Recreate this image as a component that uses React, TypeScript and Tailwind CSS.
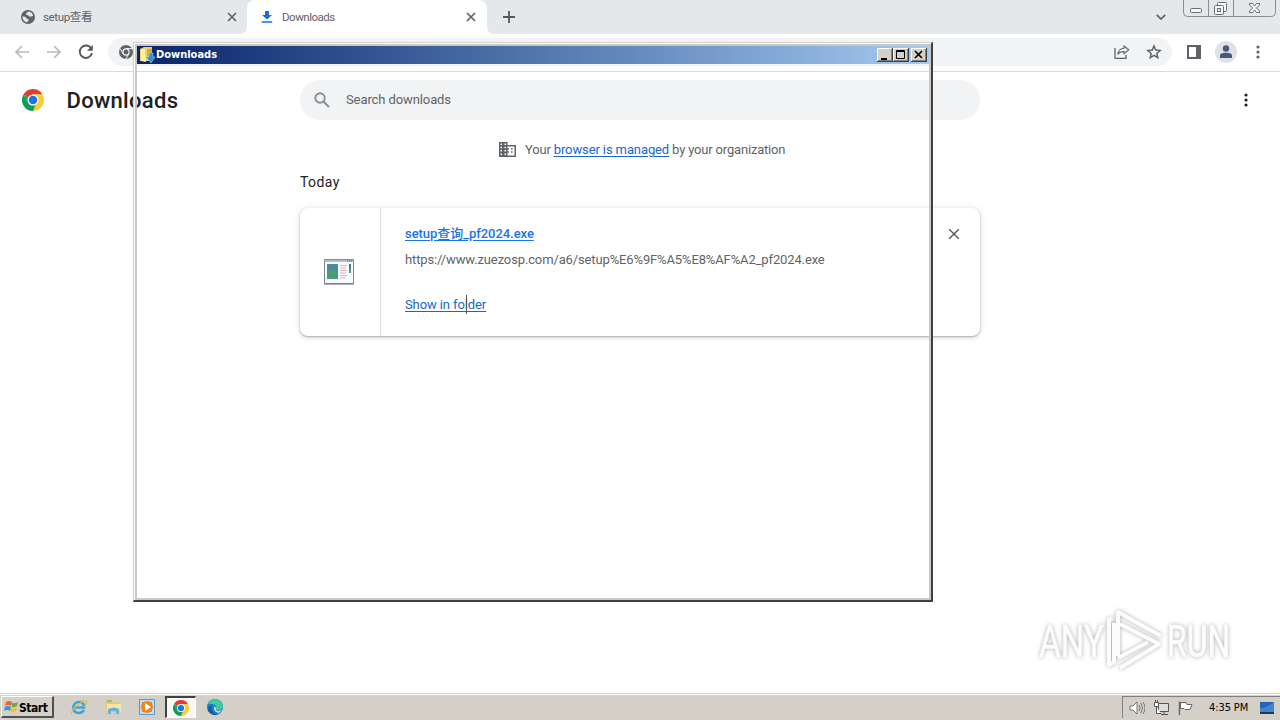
import type { ReactNode } from "react";

function ChromeLogo({ className }: { className?: string }) {
  return (
    <svg viewBox="0 0 48 48" className={className}>
      <path d="M3.2 12A24 24 0 0 1 44.8 12H24A12 12 0 0 0 13.6 18Z" fill="#e33b2e" />
      <path d="M3.2 12 13.6 30A12 12 0 0 0 24 36L24 48A24 24 0 0 1 3.2 12Z" fill="#109d58" />
      <path d="M24 48 34.4 30A12 12 0 0 0 34.4 18L24 12H44.8A24 24 0 0 1 24 48Z" fill="#fccd33" />
      <path d="M3.2 12 13.6 30 24 36 24 48 34.4 30 24 24Z" fill="#109d58" />
      <path d="M24 48 34.4 30 40 12 24 12 30 32Z" fill="#fccd33" />
      <circle cx="24" cy="24" r="12" fill="#fff" />
      <circle cx="24" cy="24" r="9.3" fill="#1a73e8" />
    </svg>
  );
}

function Close({ className }: { className?: string }) {
  return (
    <svg viewBox="0 0 10 10" className={className} fill="none" stroke="currentColor">
      <path d="M1 1 9 9M9 1 1 9" />
    </svg>
  );
}

function Dots({ className }: { className?: string }) {
  return (
    <svg viewBox="0 0 4 14" className={className} fill="currentColor">
      <circle cx="2" cy="2" r="1.6" />
      <circle cx="2" cy="7" r="1.6" />
      <circle cx="2" cy="12" r="1.6" />
    </svg>
  );
}

function TabStrip() {
  return (
    <header className="relative flex h-[34px] shrink-0 bg-[#e5e8eb] text-[11.5px] text-[#5f6368]">
      <div className="flex w-[247px] items-center pl-[21px]">
        <svg viewBox="0 0 14 14" className="size-[14px]">
          <circle cx="7" cy="7" r="7" fill="#5f6368" />
          <path d="M8 1.6 5.2 3v2l2 .2 1 1.4h2.6l1.4-1.2a5.6 5.6 0 0 0-4.2-3.8ZM1.5 6.2l3.1.9 1.2 1.6 1.6.4v1.8l-1.7 1.4A5.5 5.5 0 0 1 1.5 6.2Z" fill="#e5e8eb" />
        </svg>
        <span className="ml-2 w-[184px] pt-0.5 tracking-[-0.35px]">setup查看</span>
        <Close className="size-[10px] stroke-[1.7]" />
      </div>
      <div className="relative flex w-[240px] items-center rounded-t-lg bg-white pl-[14px]">
        <svg viewBox="0 0 12 12" className="size-3" fill="#1a6fd0">
          <path d="M4 0h4v4h3L6 8.6 1 4h3ZM.8 10.2h10.4v1.6H.8Z" />
        </svg>
        <span className="ml-[9px] w-[184px] pt-0.5 tracking-[-0.48px]">Downloads</span>
        <Close className="size-[10px] stroke-[1.7]" />
        <svg viewBox="0 0 256 8" className="absolute -left-2 bottom-0 h-2 w-64" fill="#fff">
          <path d="M0 8Q8 8 8 0V8ZM256 8Q248 8 248 0V8Z" />
        </svg>
      </div>
      <svg viewBox="0 0 12 12" className="mt-[11px] ml-4 size-3" stroke="#55585c" strokeWidth="1.8">
        <path d="M6 0V12M0 6H12" />
      </svg>
      <div className="ml-auto flex">
        <svg viewBox="0 0 10 6" className="mt-[14px] mr-[17px] h-1.5 w-2.5" fill="none" stroke="#5f6368" strokeWidth="1.7">
          <path d="M.8.8 5 5 9.2.8" />
        </svg>
        {/* caption buttons */}
        <svg viewBox="0 0 97 17" className="h-[17px] w-[97px]" fill="none" stroke="#898d92">
          <path d="M.5 0V12.5Q.5 16.5 4.5 16.5H88.5Q92.5 16.5 92.5 12.5V0M25.5 0V16M50.5 0V16" />
          <g stroke="#686c73">
            <rect x="7.5" y="8.5" width="11" height="4" rx="1" fill="#f4f6f8" />
            <rect x="34.5" y="2.5" width="9" height="9" rx="1" fill="#f4f6f8" />
            <rect x="31.5" y="5.5" width="9" height="9" rx="1" fill="#f4f6f8" />
            <rect x="34.5" y="8.5" width="3" height="3" />
            <path d="M66.500 3.500h3l2 2.500 2-2.500h3v1.500l-3 3 3 3v1.500h-3l-2-2.500-2 2.500h-3V11l3-3-3-3Z" fill="#f4f6f8" />
          </g>
        </svg>
      </div>
    </header>
  );
}

function Toolbar() {
  return (
    <div className="flex h-[38px] shrink-0 items-center border-b border-[#d8dadd] bg-white pb-px pl-[14px] text-[#5f6368]">
      <svg viewBox="0 0 16 14" className="h-[14px] w-4" fill="none" stroke="#b9bbbe" strokeWidth="1.7">
        <path d="M15 7H2M8 1 2 7 8 13" />
      </svg>
      <svg viewBox="0 0 16 14" className="ml-4 h-[14px] w-4" fill="none" stroke="#b9bbbe" strokeWidth="1.7">
        <path d="M1 7H14M8 1 14 7 8 13" />
      </svg>
      <svg viewBox="0 0 16 16" className="ml-4 size-4" fill="none" stroke="#55585c" strokeWidth="1.9">
        <path d="M13.3 4.5A6.2 6.2 0 1 0 14 9.3" />
        <path d="M14.8 1V6.8H9Z" fill="#55585c" stroke="none" />
      </svg>
      <div className="ml-[14px] flex h-7 w-[1064px] items-center rounded-full bg-[#f1f3f4] pr-[10px] pl-[11px]">
        <svg viewBox="0 0 14 14" className="size-[14px]">
          <circle cx="7" cy="7" r="7" fill="#5f6368" />
          <path d="M7 3.600H13.400M4.050 8.700 1 3.400M9.950 8.700 6.700 14" stroke="#f1f3f4" strokeWidth="1" />
          <circle cx="7" cy="7" r="3.700" fill="#f1f3f4" />
          <circle cx="7" cy="7" r="2.500" fill="#5f6368" />
        </svg>
        <svg viewBox="0 0 16 14" className="ml-auto h-[14px] w-4" fill="none" stroke="#5f6368" strokeWidth="1.3">
          <path d="M1 3V13.3H12V10" />
          <path d="M10 1 14.8 4.8 10 8.6V6.5Q6 6.3 3.8 9.4 4.5 3.6 10 3.2Z" strokeWidth="1.1" />
        </svg>
        <svg viewBox="0 0 16 16" className="ml-4 size-4" fill="none" stroke="#5f6368" strokeWidth="1.5">
          <path d="m8 2 1.7 4.1 4.4.4-3.3 2.9 1 4.3L8 11.4l-3.8 2.3 1-4.3L1.900 6.500l4.400-.4Z" />
        </svg>
      </div>
      <svg viewBox="0 0 14 14" className="ml-[15px] size-[14px]">
        <path d="M0 0H14V14H0ZM2 2V12H9V2Z" fill="#5f6368" fillRule="evenodd" />
      </svg>
      <svg viewBox="0 0 22 22" className="ml-[14px] size-[22px]">
        <circle cx="11" cy="11" r="11" fill="#dee1e6" />
        <circle cx="11" cy="7.5" r="3.2" fill="#4b587c" />
        <path d="M5 17V14.5Q5 11.8 11 11.8T17 14.5V17Z" fill="#4b587c" />
      </svg>
      <Dots className="ml-[19px] h-[14px] w-1" />
    </div>
  );
}

function Link({ children, className = "" }: { children: ReactNode; className?: string }) {
  return <a className={`text-[#1a67c9] underline underline-offset-2 ${className}`}>{children}</a>;
}

function DownloadsPage() {
  return (
    <main className="flex flex-1 flex-col bg-white text-[13px] text-[#5f6368]">
      <div className="flex h-14 items-center pl-[22px]">
        <ChromeLogo className="size-[22px]" />
        <h1 className="ml-[22.5px] w-[233.5px] text-[22px] font-medium tracking-[0.3px] text-[#202124]">Downloads</h1>
        <div className="flex h-10 w-[680px] items-center rounded-full bg-[#f1f3f4] pl-[14px]">
          <svg viewBox="0 0 16 16" className="size-4" fill="none" stroke="#8a8d91" strokeWidth="1.9">
            <circle cx="6" cy="6" r="4.7" />
            <path d="m9.5 9.5 5.5 5.5" />
          </svg>
          <span className="ml-4 tracking-[-0.1px]">Search downloads</span>
        </div>
        <Dots className="mr-8 ml-auto h-[14px] w-1 text-[#202124]" />
      </div>

      <section className="mx-auto w-[680px]">
        <div className="flex h-[43px] items-center pl-[199px]">
          <svg viewBox="0 0 17 15" className="size-[17px] shrink-0" fill="#5f6368">
            <path d="M0 0H8.500V3H17V15H0ZM1.500 1.500v1.500H3V1.500Zm4 0v1.500H7V1.500Zm-4 3.200v1.500H3V4.700Zm4 0v1.500H7V4.700Zm-4 3.300v1.500H3V8Zm4 0v1.500H7V8Zm-4 3.500V13H3v-1.500Zm4 0V13H7v-1.500ZM8.500 4.600V6.200H10V7.800H8.500V9.200H10v1.600H8.500v2.600h7V4.600Zm3.500 1.600h1.600v1.600H12Zm0 3h1.600v1.600H12Z" fillRule="evenodd" />
          </svg>
          <p className="ml-[9px] whitespace-nowrap tracking-[-0.18px]">
            Your <Link className="tracking-[-0.11px]">browser is managed</Link> by your organization
          </p>
        </div>
        <h2 className="h-[37px] pt-px text-[14px] tracking-[0.4px] text-[#202124]">Today</h2>
        <div className="flex h-32 rounded-lg bg-white shadow-[0_1px_2px_rgba(60,64,67,0.35),0_1px_5px_1px_rgba(60,64,67,0.15)]">
          <div className="flex w-[81px] justify-center border-r border-[#dadce0] pt-[51px] pr-[2px]">
            {/* generic .exe icon */}
            <svg viewBox="0 0 32 26" className="h-[26px] w-8">
              <path d="M1.5.5h29v24h-29Z" fill="#f8fafb" stroke="#818b96" />
              <path d="M2 1h28v2H2Z" fill="#b5bfca" />
              <path d="M24 2h1M26 2h1M28 2h1" stroke="#4d5967" />
              <path d="M1 25h30" stroke="#68717a" />
              <path d="M4 5h11v15H4Z" fill="#468ca3" />
              <path d="M4 14q5-6 11-2v8H4Z" fill="#4a9c78" />
              <path d="M17 6.5h7M17 9h6M17 11.5h7M17 14h6M17 16.5h7M17 19h6" stroke="#d8b7b7" />
              <path d="M26 5h2v9h-2Z" fill="#476f99" />
              <path d="M26 9h2v5h-2Z" fill="#4b9a75" />
            </svg>
          </div>
          <div className="flex-1 pl-6">
            <p className="mt-4 h-5 leading-5 tracking-[-0.05px]"><Link className="font-medium text-[#1a73e8]">setup查询_pf2024.exe</Link></p>
            <p className="mt-[6px] h-5 leading-5 tracking-[-0.13px]">https://www.zuezosp.com/a6/setup%E6%9F%A5%E8%AF%A2_pf2024.exe</p>
            <p className="relative mt-[25px] h-5 w-fit leading-5 tracking-[-0.1px]">
              <Link>Show in folder</Link>
              <span className="absolute top-0 left-[61px] h-[19px] w-px bg-[#555]" />
            </p>
          </div>
          <Close className="mt-[20px] mr-[20px] size-3 stroke-[1.1] text-[#505358]" />
        </div>
      </section>
    </main>
  );
}

function CaptionButton({ children }: { children: ReactNode }) {
  return (
    <svg viewBox="0 0 16 14" className="h-[14px] w-4">
      <path d="M0 0H16V14H0Z" fill="#404040" />
      <path d="M0 0H15V13H0Z" fill="#fff" />
      <path d="M1 1H15V13H1Z" fill="#808080" />
      <path d="M1 1H14V12H1Z" fill="#d4d0c8" />
      {children}
    </svg>
  );
}

function FolderWindow() {
  return (
    <div className="absolute top-[42px] left-[133px] h-[560px] w-[800px] border-t border-r-2 border-b-2 border-l border-t-[#d4d0c8] border-r-[#404040] border-b-[#404040] border-l-[#d4d0c8]">
      <div className="h-full border-t border-l border-white">
        <div className="h-full border-2 border-[#c8c8c4]">
          <div className="flex h-[18px] items-center bg-linear-to-r from-[#0a246a] to-[#a6caf0] pr-[2px] pl-[2px]">
            <svg viewBox="0 0 16 16" className="size-4">
              <path d="M1 2 5 0h8v14H1Z" fill="#efcf62" />
              <path d="M2 2h4l1 13-5-1Z" fill="#fff0a3" />
              <path d="M8 2h5v9H8Z" fill="#d8aa38" />
              <path d="M10 6h4v4h2l-4 6-5-6h3Z" fill="#2c91d5" stroke="#9bd6f5" strokeWidth=".6" />
            </svg>
            <span className="ml-[1px] font-['DejaVu_Sans_Condensed','DejaVu_Sans',sans-serif] text-[11px] font-bold text-white">Downloads</span>
            <div className="ml-auto flex">
              <CaptionButton><path d="M4 10h6v2H4Z" /></CaptionButton>
              <CaptionButton><path d="M3.5 2.5h8v8h-8ZM3 3.5h9" fill="none" stroke="#000" /></CaptionButton>
              <div className="ml-[2px] h-[14px]"><CaptionButton><path d="m4 3 7 7m0-7-7 7" stroke="#000" strokeWidth="1.6" /></CaptionButton></div>
            </div>
          </div>
        </div>
      </div>
    </div>
  );
}

function Watermark() {
  return (
    <div className="absolute top-[608px] left-[1036px] drop-shadow-[0_0_2px_rgba(0,0,0,0.32)]">
      <svg viewBox="0 0 200 64" className="h-16 w-[200px] overflow-visible">
        <g fontFamily="Roboto, sans-serif" fontSize="45" fill="#fcfcfc" stroke="#fcfcfc" strokeWidth=".6">
          <text transform="translate(3 49) scale(.74 1)">ANY</text>
          <text transform="translate(131 49) scale(.71 1)">RUN</text>
        </g>
        <g fill="none" stroke="#fcfcfc" strokeWidth="4" strokeLinejoin="round">
          <path d="M82 48V4L125 28" />
          <path d="M76 10 73 12V57L78 54V15" />
          <path d="M84 16 123 36 84 60M82 50 112 34" />
        </g>
      </svg>
    </div>
  );
}

function Taskbar() {
  return (
    <footer className="flex h-[27px] shrink-0 items-center border-t border-[#d4d0c8] bg-[#d4d0c8] font-['DejaVu_Sans_Condensed','DejaVu_Sans',sans-serif] text-[11px] text-black shadow-[inset_0_1px_0_#fff]">
      <div className="ml-px flex h-[22px] w-[53px] items-center border-t border-r-2 border-b-2 border-l border-t-white border-r-[#505050] border-b-[#505050] border-l-white">
        <svg viewBox="0 0 16 16" className="ml-px size-4">
          <path d="M3 3Q6 1 9 3L8 7Q5 5 2 7Z" fill="#ea6530" />
          <path d="M9.5 3.5Q12 5 15 3L14 7Q11 9 8.5 7.5Z" fill="#69ac43" />
          <path d="M2 8Q5 6 8 8L7 12Q4 10 1 12Z" fill="#468dd0" />
          <path d="M8.5 8.5Q11 10 14 8L13 12Q10 14 7.5 12.5Z" fill="#f4bd31" />
        </svg>
        <b className="pt-0.5 text-[12px] tracking-[-0.45px]">Start</b>
      </div>
      <svg viewBox="0 0 18 18" className="ml-4 size-[18px]" fill="none">
        <path d="M14 12Q12 15 9 15C1 15 2 4 9 4Q14 4 14 9.5H5" stroke="#38a5df" strokeWidth="2.6" />
        <path d="M2 16C-1 13 12 2 16 3Q18 4 14 9" stroke="#e7bb3e" strokeWidth="1.2" />
      </svg>
      <svg viewBox="0 0 18 18" className="ml-4 size-[18px]">
        <path d="M2 3H8L9 4.5H16V14H2Z" fill="#e8c968" />
        <path d="M3 6H17V13H3Z" fill="#f8e7a2" />
        <path d="M3 3h5" stroke="#57a86a" />
        <path d="M4 16V11Q10 8 15 11V16H12V13H7V16Z" fill="#66b2db" />
      </svg>
      <svg viewBox="0 0 18 18" className="ml-4 size-[18px]">
        <path d="M1.5 1.5h15v15h-15Z" fill="#c3def3" stroke="#579bd0" />
        <path d="M4 4h10v10H4Z" fill="#ef8421" />
        <circle cx="9" cy="9" r="6" fill="#ef8421" />
        <path d="m7 5 6 4-6 4Z" fill="#fff" />
      </svg>
      <div className="ml-[9px] flex h-[22px] w-[31px] items-center justify-center border-t-2 border-r border-b border-l-2 border-t-[#404040] border-r-white border-b-white border-l-[#404040] bg-[#f8f7f5]">
        <ChromeLogo className="size-4" />
      </div>
      <svg viewBox="0 0 16 16" className="ml-[11px] size-4">
        <circle cx="8" cy="8" r="8" fill="#1682c9" />
        <path d="M1 5Q3 0 8 0C13 0 16 4 16 8Q15 11 11 11 8 11 9 8 8 4 1 5Z" fill="#43c9a0" />
        <path d="M5 7Q3 13 11 16 5 17 1 12 0 7 5 7Z" fill="#155a9b" />
        <path d="M9 8Q8 11 11 12l4-1-3 3Q6 13 7 8Z" fill="#d4d0c8" />
      </svg>
      <div className="ml-auto flex h-[22px] w-[158px] items-center border-t border-l border-[#808080] pl-[6px]">
        <svg viewBox="0 0 16 16" className="size-4" fill="none" stroke="#777">
          <path d="M1 6h3l4-4v12l-4-4H1Z" fill="#fff" />
          <path d="M10 5q2 3 0 6M12 3q3 5 0 10M14 2q4 6 0 12" />
        </svg>
        <svg viewBox="0 0 16 16" className="ml-2 size-4" fill="none" stroke="#555">
          <path d="M5.5 3.5h10v8h-10ZM8 14.5h7M11 12v3" fill="#ddd" />
          <path d="M1.5 2.5h4v4h-4ZM2.5 0v2M4.5 0v2M3.5 7v6.5H8" fill="#fff" />
        </svg>
        <svg viewBox="0 0 16 16" className="ml-2 size-4" fill="none" stroke="#666">
          <path d="M2.5 15V1.500" strokeWidth="1.400" />
          <path d="M3.5 2.5H9L10 4.5H15L13 9.5H8L7 8.5H3.5Z" fill="#fff" />
        </svg>
        <span className="ml-4 w-[50px] pt-0.5 whitespace-nowrap tracking-[-0.1px]">4:35 PM</span>
        <svg viewBox="0 0 16 14" className="h-[14px] w-4">
          <path d="M1 1H15V11H1Z" fill="#2464b4" />
          <path d="M1 7Q8 7 15 1V11H1Z" fill="#3e84d0" />
          <path d="M1 11H15V13H1Z" fill="#23364e" />
        </svg>
      </div>
    </footer>
  );
}

export default function App() {
  return (
    <div className="relative flex h-[720px] w-[1280px] flex-col overflow-hidden font-[Roboto,'Noto_Sans_CJK_SC',sans-serif]">
      <TabStrip />
      <Toolbar />
      <DownloadsPage />
      <Taskbar />
      <FolderWindow />
      <Watermark />
    </div>
  );
}
